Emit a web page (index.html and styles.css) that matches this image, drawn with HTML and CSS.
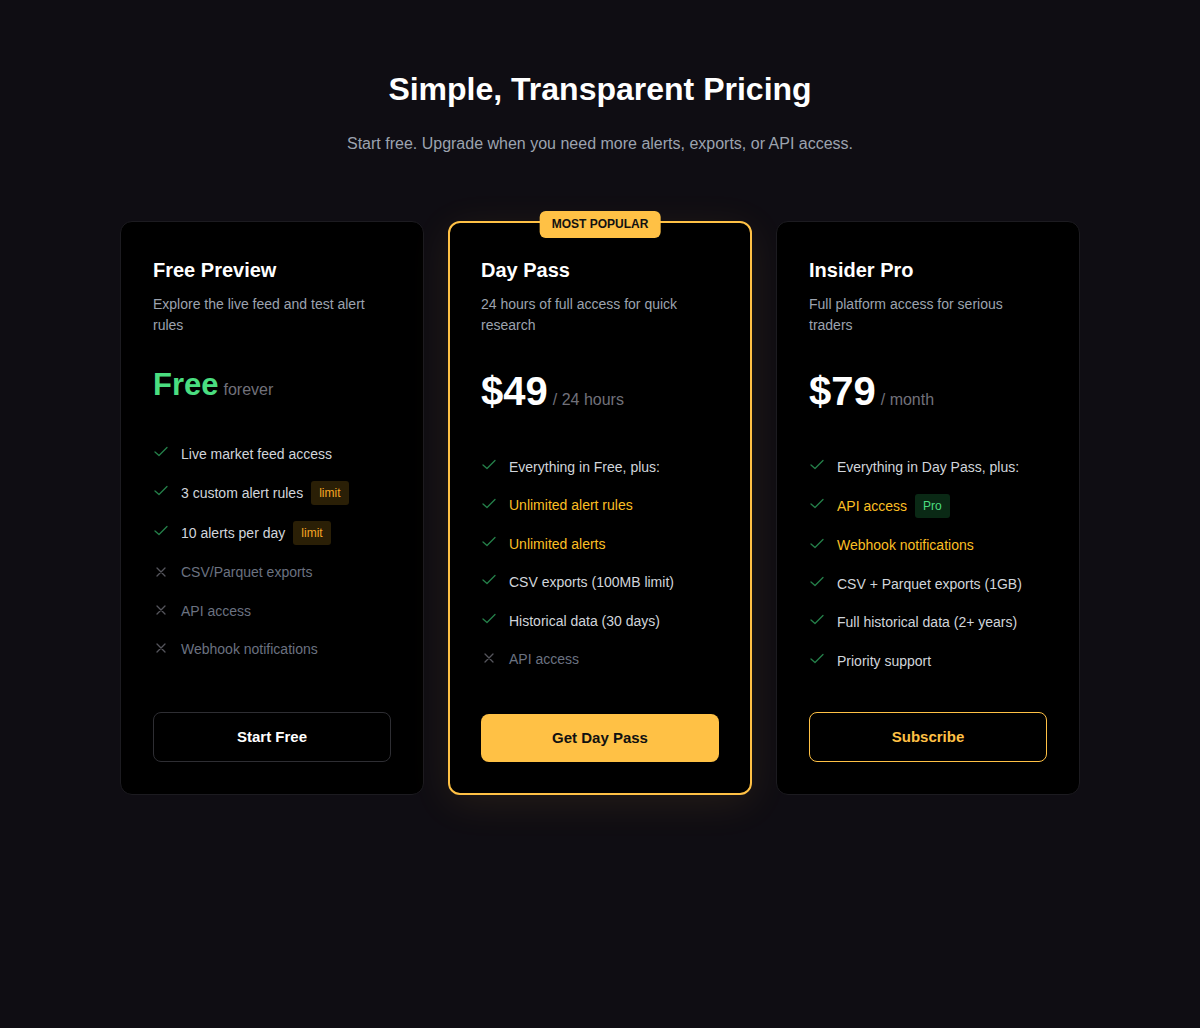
FILE: index.html
```html
<!DOCTYPE html>
<html lang="en">
<head>
<meta charset="utf-8">
<title>Pricing</title>
<link rel="stylesheet" href="styles.css">
</head>
<body>
<section class="pricing">
  <header class="intro">
    <h1 class="intro-title">Simple, Transparent Pricing</h1>
    <p class="intro-sub">Start free. Upgrade when you need more alerts, exports, or API access.</p>
  </header>

  <div class="plans">
    <article class="plan">
      <h2 class="plan-name">Free Preview</h2>
      <p class="plan-desc">Explore the live feed and test alert rules</p>
      <div class="price price-small"><span class="amount amount-free">Free</span><span class="period">forever</span></div>
      <ul class="features features-free">
        <li class="feat"><svg class="ico ico-yes" viewBox="0 0 16 16"><polyline points="2,8 6,11.5 14,3.5"/></svg><span>Live market feed access</span></li>
        <li class="feat"><svg class="ico ico-yes" viewBox="0 0 16 16"><polyline points="2,8 6,11.5 14,3.5"/></svg><span>3 custom alert rules</span><span class="tag tag-limit">limit</span></li>
        <li class="feat"><svg class="ico ico-yes" viewBox="0 0 16 16"><polyline points="2,8 6,11.5 14,3.5"/></svg><span>10 alerts per day</span><span class="tag tag-limit">limit</span></li>
        <li class="feat feat-off"><svg class="ico ico-no" viewBox="0 0 16 16"><path d="M4 4L12 12M12 4L4 12"/></svg><span>CSV/Parquet exports</span></li>
        <li class="feat feat-off"><svg class="ico ico-no" viewBox="0 0 16 16"><path d="M4 4L12 12M12 4L4 12"/></svg><span>API access</span></li>
        <li class="feat feat-off"><svg class="ico ico-no" viewBox="0 0 16 16"><path d="M4 4L12 12M12 4L4 12"/></svg><span>Webhook notifications</span></li>
      </ul>
      <a class="btn btn-outline" href="#">Start Free</a>
    </article>

    <article class="plan plan-featured">
      <span class="ribbon">MOST POPULAR</span>
      <h2 class="plan-name">Day Pass</h2>
      <p class="plan-desc">24 hours of full access for quick research</p>
      <div class="price"><span class="amount">$49</span><span class="period">/ 24 hours</span></div>
      <ul class="features">
        <li class="feat"><svg class="ico ico-yes" viewBox="0 0 16 16"><polyline points="2,8 6,11.5 14,3.5"/></svg><span>Everything in Free, plus:</span></li>
        <li class="feat feat-hi"><svg class="ico ico-yes" viewBox="0 0 16 16"><polyline points="2,8 6,11.5 14,3.5"/></svg><span>Unlimited alert rules</span></li>
        <li class="feat feat-hi"><svg class="ico ico-yes" viewBox="0 0 16 16"><polyline points="2,8 6,11.5 14,3.5"/></svg><span>Unlimited alerts</span></li>
        <li class="feat"><svg class="ico ico-yes" viewBox="0 0 16 16"><polyline points="2,8 6,11.5 14,3.5"/></svg><span>CSV exports (100MB limit)</span></li>
        <li class="feat"><svg class="ico ico-yes" viewBox="0 0 16 16"><polyline points="2,8 6,11.5 14,3.5"/></svg><span>Historical data (30 days)</span></li>
        <li class="feat feat-off"><svg class="ico ico-no" viewBox="0 0 16 16"><path d="M4 4L12 12M12 4L4 12"/></svg><span>API access</span></li>
      </ul>
      <a class="btn btn-solid" href="#">Get Day Pass</a>
    </article>

    <article class="plan">
      <h2 class="plan-name">Insider Pro</h2>
      <p class="plan-desc">Full platform access for serious traders</p>
      <div class="price"><span class="amount">$79</span><span class="period">/ month</span></div>
      <ul class="features">
        <li class="feat"><svg class="ico ico-yes" viewBox="0 0 16 16"><polyline points="2,8 6,11.5 14,3.5"/></svg><span>Everything in Day Pass, plus:</span></li>
        <li class="feat feat-hi"><svg class="ico ico-yes" viewBox="0 0 16 16"><polyline points="2,8 6,11.5 14,3.5"/></svg><span>API access</span><span class="tag tag-pro">Pro</span></li>
        <li class="feat feat-hi"><svg class="ico ico-yes" viewBox="0 0 16 16"><polyline points="2,8 6,11.5 14,3.5"/></svg><span>Webhook notifications</span></li>
        <li class="feat"><svg class="ico ico-yes" viewBox="0 0 16 16"><polyline points="2,8 6,11.5 14,3.5"/></svg><span>CSV + Parquet exports (1GB)</span></li>
        <li class="feat"><svg class="ico ico-yes" viewBox="0 0 16 16"><polyline points="2,8 6,11.5 14,3.5"/></svg><span>Full historical data (2+ years)</span></li>
        <li class="feat"><svg class="ico ico-yes" viewBox="0 0 16 16"><polyline points="2,8 6,11.5 14,3.5"/></svg><span>Priority support</span></li>
      </ul>
      <a class="btn btn-ghost" href="#">Subscribe</a>
    </article>
  </div>
</section>
</body>
</html>
```

FILE: styles.css
```css
* { box-sizing: border-box; }

html, body {
  margin: 0;
  padding: 0;
  background: #0f0d13;
  min-height: 100%;
}

body {
  font-family: "Liberation Sans", Arial, sans-serif;
  color: #ffffff;
  min-height: 1028px;
}

.pricing {
  padding: 69px 0 80px;
}

.intro {
  text-align: center;
}

.intro-title {
  margin: 0;
  font-size: 32px;
  line-height: 40px;
  font-weight: 700;
  color: #ffffff;
}

.intro-sub {
  margin: 23px 0 0;
  font-size: 16px;
  line-height: 24px;
  color: #9ca3af;
}

.plans {
  max-width: 960px;
  margin: 65px auto 0;
  display: grid;
  grid-template-columns: repeat(3, 1fr);
  gap: 24px;
}

.plan {
  position: relative;
  display: flex;
  flex-direction: column;
  background: #000000;
  border: 1px solid #1c1b20;
  border-radius: 12px;
  padding: 34px 32px 32px;
}

.plan-featured {
  border: 2px solid #ffc145;
  padding: 33px 31px 31px;
  box-shadow: 0 8px 40px rgba(255, 193, 69, 0.09);
}

.ribbon {
  position: absolute;
  top: -12px;
  left: 50%;
  transform: translateX(-50%);
  background: #ffc145;
  color: #111111;
  font-size: 12px;
  font-weight: 700;
  line-height: 15px;
  padding: 6px 12px;
  border-radius: 6px;
  white-space: nowrap;
}

.plan-name {
  margin: 0;
  font-size: 20px;
  line-height: 28px;
  font-weight: 700;
  color: #ffffff;
}

.plan-desc {
  margin: 10px 0 0;
  font-size: 14px;
  line-height: 21px;
  color: #9ca3af;
}

.price {
  margin-top: 31px;
  display: flex;
  align-items: baseline;
}

.amount {
  font-size: 40px;
  line-height: 48px;
  font-weight: 700;
  color: #ffffff;
}

.amount-free {
  font-size: 31px;
  line-height: 36px;
  color: #4ade80;
}

.period {
  margin-left: 5px;
  font-size: 16px;
  color: #71717a;
}

.features {
  list-style: none;
  margin: 41px 0 40px;
  padding: 0;
  display: flex;
  flex-direction: column;
  gap: 16px;
}

.features-free {
  margin-top: 40px;
}

.feat {
  display: flex;
  align-items: center;
  font-size: 14px;
  line-height: 22.4px;
  color: #d1d5db;
}

.feat-hi { color: #fbbf24; }
.feat-off { color: #6b7280; }

.ico {
  flex: none;
  width: 16px;
  height: 16px;
  margin-right: 12px;
  fill: none;
  stroke-width: 1.3;
  stroke-linecap: round;
  stroke-linejoin: round;
  position: relative;
  top: -2px;
}

.ico-yes { stroke: #25804a; }
.ico-no { stroke: #55555c; top: -1px; }

.tag {
  margin-left: 8px;
  font-size: 12px;
  line-height: 16px;
  padding: 4px 8px;
  border-radius: 3px;
}

.tag-limit {
  background: #2a1f06;
  color: #f5a623;
}

.tag-pro {
  background: #0a2915;
  color: #4ade80;
}

.btn {
  margin-top: auto;
  display: block;
  text-align: center;
  text-decoration: none;
  font-size: 15px;
  font-weight: 700;
  line-height: 20px;
  padding: 14px 16px;
  border-radius: 8px;
  border: 1px solid transparent;
}

.btn-outline {
  border-color: #2e2e33;
  color: #ffffff;
}

.btn-solid {
  background: #ffc145;
  color: #111111;
  border: 0;
  padding: 14px 16px;
}

.btn-ghost {
  border-color: #ffc145;
  color: #ffc145;
}
```
